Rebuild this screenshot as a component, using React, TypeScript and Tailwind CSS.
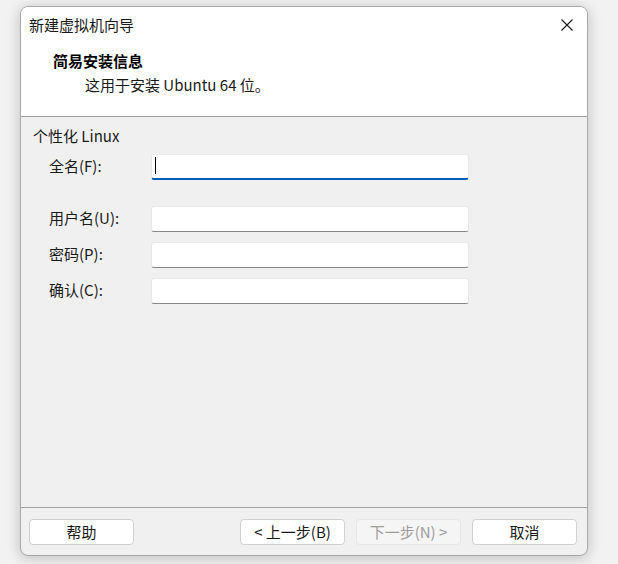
import React from "react"

const font = { fontFamily: '"Noto Sans CJK SC", "Noto Sans", sans-serif' }

function Field({ label, active }: { label: string; active?: boolean }) {
  return (
    <div className="flex items-center h-[26px]">
      <div className="w-[130px] pl-[28px] pb-[3px] text-[15px] text-[#1a1a1a] leading-none">{label}</div>
      <div
        className={
          active
            ? "relative w-[318px] h-[26px] bg-white rounded-[3px] border border-[#e8e8e8] border-b-2 border-b-[#005fb8]"
            : "w-[318px] h-[26px] bg-white rounded-[3px] border border-[#e8e8e8] border-b-[#868686]"
        }
      >
        {active && <div className="absolute left-[3px] top-[2px] w-px h-[17px] bg-black" />}
      </div>
    </div>
  )
}

function Btn({ children, disabled }: { children: React.ReactNode; disabled?: boolean }) {
  return (
    <button
      className={
        disabled
          ? "w-[105px] h-[26px] rounded-[4px] border border-[#e6e6e6] bg-[#f5f5f5] text-[15px] text-[#9d9d9d] leading-none"
          : "w-[105px] h-[26px] rounded-[4px] border border-[#d0d0d0] bg-white text-[15px] text-[#1a1a1a] leading-none"
      }
    >
      {children}
    </button>
  )
}

export default function App() {
  return (
    <div className="w-[618px] h-[564px] bg-[#f2f2f2] pl-[20px] pt-[6px]" style={font}>
      <div className="w-[568px] h-[550px] rounded-[8px] border border-[#a9a9a9] bg-[#f0f0f0] shadow-[0_2px_14px_rgba(0,0,0,0.22)] flex flex-col overflow-hidden">
        {/* Header */}
        <div className="h-[110px] bg-white border-b border-[#a0a0a0] flex flex-col">
          <div className="h-[36px] flex items-center justify-between pl-[8px] pr-[14px]">
            <span className="text-[15px] text-[#1a1a1a]">新建虚拟机向导</span>
            <svg width="12" height="12" viewBox="0 0 12 12" className="text-[#1a1a1a]">
              <path d="M0.5 0.5L11.5 11.5M11.5 0.5L0.5 11.5" stroke="currentColor" strokeWidth="1.1" />
            </svg>
          </div>
          <div className="mt-[8px] pl-[32px] h-[20px] flex items-center text-[15px] font-bold text-black">
            简易安装信息
          </div>
          <div className="mt-[4px] pl-[64px] h-[20px] flex items-center text-[15px] text-[#1a1a1a]">
            这用于安装 Ubuntu 64 位。
          </div>
        </div>

        {/* Body */}
        <div className="flex-1 flex flex-col pt-[9px]">
          <div className="pl-[12px] h-[20px] flex items-center text-[15px] text-[#1a1a1a]">个性化 Linux</div>
          <div className="mt-[8px]">
            <Field label="全名(F):" active />
          </div>
          <div className="mt-[26px] flex flex-col gap-[10px]">
            <Field label="用户名(U):" />
            <Field label="密码(P):" />
            <Field label="确认(C):" />
          </div>
        </div>

        {/* Footer */}
        <div className="h-[48px] border-t border-[#a0a0a0] flex items-center pl-[8px] pr-[10px]">
          <Btn>帮助</Btn>
          <div className="flex-1" />
          <div className="flex gap-[11px]">
            <Btn>&lt; 上一步(B)</Btn>
            <Btn disabled>下一步(N) &gt;</Btn>
            <Btn>取消</Btn>
          </div>
        </div>
      </div>
    </div>
  )
}
